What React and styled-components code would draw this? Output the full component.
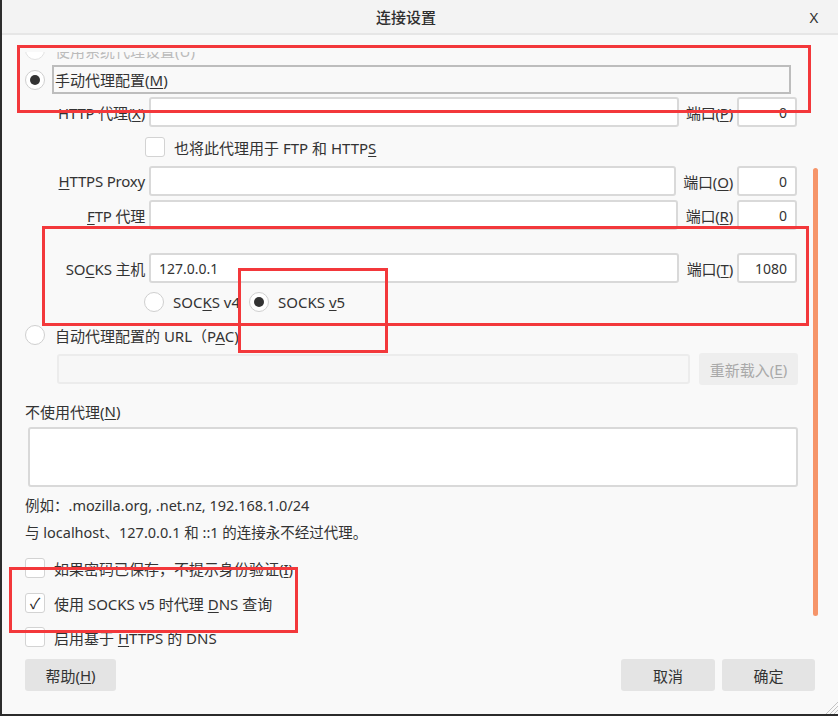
import React from "react";
import styled, { createGlobalStyle } from "styled-components";

const Global = createGlobalStyle`
  html, body { margin: 0; padding: 0; background: #f9f9f9; }
  body { font-family: "Noto Sans", "Noto Sans CJK SC", sans-serif; font-size: 15px; color: #333; }
  u { text-underline-offset: 2px; }
`;

const Window = styled.div`
  position: relative;
  width: 836px;
  height: 714px;
  border-left: 2px solid #2d2d2d;
  border-bottom: 2px solid #2b2b2b;
  background: #f9f9f9;
  display: flex;
  flex-direction: column;
  overflow: hidden;
`;

const TitleBar = styled.div`
  height: 33px;
  flex: none;
  display: flex;
  align-items: center;
  padding: 0 16px 0 4px;
  background: #f3f3f3;
  border-bottom: 2px solid #e6e6e6;
`;

const Title = styled.div`
  flex: 1;
  text-align: center;
  font-size: 15px;
  font-weight: 500;
  color: #2e2e2e;
`;

const Close = styled.div`
  width: 16px;
  text-align: center;
  font-size: 15px;
  color: #333;
`;

const Scroll = styled.div`
  flex: none;
  height: 600px;
  margin-top: 17px;
  overflow: hidden;
`;

const Inner = styled.div`
  margin-top: -17px;
  padding: 0 23px;
  display: flex;
  flex-direction: column;
`;

const Row = styled.div`
  display: flex;
  align-items: center;
  height: ${(p) => p.h || 30}px;
  margin-top: ${(p) => p.mt || 0}px;
  margin-left: ${(p) => p.ml || 0}px;
  gap: ${(p) => p.gap || 0}px;
  color: ${(p) => (p.faded ? "#bbb" : "inherit")};
  white-space: nowrap;
`;

const Focus = styled.div`
  margin-left: 7px;
  width: 734px;
  height: 25px;
  border: 2px solid #bdbdbd;
  display: flex;
  align-items: center;
  padding-left: 1px;
`;

const ProxyGrid = styled.div`
  display: grid;
  grid-template-columns: 120px 530px 50px 60px;
  column-gap: 4px;
  align-items: center;
  height: 30px;
  margin-top: ${(p) => p.mt || 0}px;
  white-space: nowrap;
`;

const FieldLabel = styled.div`
  text-align: right;
  letter-spacing: -0.2px;
`;

const Input = styled.div`
  box-sizing: border-box;
  height: ${(p) => p.h || 30}px;
  width: ${(p) => (p.w ? `${p.w}px` : "auto")};
  background: ${(p) => (p.disabled ? "#f7f7f7" : "#fff")};
  border: 2px solid ${(p) => (p.disabled ? "#ececec" : "#d9d9d9")};
  border-radius: 3px;
  display: flex;
  align-items: center;
  justify-content: ${(p) => (p.right ? "flex-end" : "flex-start")};
  padding: 0 8px;
  font-size: 14px;
  color: #333;
`;

const RadioDot = styled.span`
  box-sizing: border-box;
  flex: none;
  width: 20px;
  height: 20px;
  border-radius: 50%;
  background: #fff;
  border: 1px solid ${(p) => (p.faded ? "#e2e2e2" : "#cfcfcf")};
  display: flex;
  align-items: center;
  justify-content: center;
  &::after {
    content: "";
    width: 10px;
    height: 10px;
    border-radius: 50%;
    background: #333;
    display: ${(p) => (p.checked ? "block" : "none")};
  }
`;

const Box = styled.span`
  box-sizing: border-box;
  flex: none;
  width: 20px;
  height: 20px;
  border-radius: 3px;
  background: #fff;
  border: 1px solid #d3d3d3;
  display: flex;
  align-items: center;
  justify-content: center;
  color: #222;
  font-size: 15px;
  line-height: 1;
`;

const PlainLabel = styled.div`
  height: 26px;
  margin-top: ${(p) => p.mt || 0}px;
  display: flex;
  align-items: center;
`;

const TextArea = styled.div`
  box-sizing: border-box;
  margin: 3px 0 0 3px;
  width: 770px;
  height: 60px;
  background: #fff;
  border: 2px solid #d9d9d9;
  border-radius: 3px;
`;

const Note = styled.div`
  height: 24px;
  margin-top: ${(p) => p.mt || 0}px;
  display: flex;
  align-items: center;
  font-size: 14.5px;
`;

const Footer = styled.div`
  flex: none;
  display: flex;
  gap: 7px;
  padding: 7px 23px 0 23px;
`;

const Button = styled.div`
  box-sizing: border-box;
  height: 32px;
  width: ${(p) => p.w}px;
  background: ${(p) => (p.disabled ? "#eeeeee" : "#e4e4e4")};
  color: ${(p) => (p.disabled ? "#a9a9a9" : "#333")};
  border-radius: 3px;
  display: flex;
  align-items: center;
  justify-content: center;
  font-size: 15px;
  margin-left: ${(p) => (p.push ? "auto" : "0")};
  white-space: nowrap;
`;

const Mark = styled.div`
  position: absolute;
  left: ${(p) => p.x}px;
  top: ${(p) => p.y}px;
  width: ${(p) => p.w}px;
  height: ${(p) => p.h}px;
  box-sizing: border-box;
  border: 3px solid #f3383b;
  pointer-events: none;
`;

const Thumb = styled.div`
  position: absolute;
  left: 811px;
  top: 168px;
  width: 5px;
  height: 448px;
  border-radius: 3px;
  background: #f6956a;
`;

const Grip = styled.svg`
  position: absolute;
  right: 0;
  bottom: 0;
`;

function Radio({ checked, faded }) {
  return <RadioDot checked={checked} faded={faded} />;
}

function Check({ checked }) {
  return <Box>{checked ? "✓" : ""}</Box>;
}

const proxies = [
  { label: <>HTTP 代理(<u>X</u>)</>, port: <>端口(<u>P</u>)</>, num: "0", mt: 3 },
];

export default function App() {
  return (
    <>
      <Global />
      <Window>
        <TitleBar>
          <Title>连接设置</Title>
          <Close>X</Close>
        </TitleBar>
        <Scroll>
          <Inner>
            <Row h={30} gap={10} faded>
              <Radio faded />
              <span>使用系统代理设置(U)</span>
            </Row>
            <Row h={29}>
              <Radio checked />
              <Focus>手动代理配置(<u>M</u>)</Focus>
            </Row>
            {proxies.map((p, i) => (
              <ProxyGrid key={i} mt={p.mt}>
                <FieldLabel>{p.label}</FieldLabel>
                <Input />
                <FieldLabel>{p.port}</FieldLabel>
                <Input right>{p.num}</Input>
              </ProxyGrid>
            ))}
            <Row h={30} mt={5} ml={120} gap={9}>
              <Check />
              <span>也将此代理用于 FTP 和 HTTP<u>S</u></span>
            </Row>
            <ProxyGrid mt={4}>
              <FieldLabel><u>H</u>TTPS Proxy</FieldLabel>
              <Input w={527} />
              <FieldLabel>端口(<u>O</u>)</FieldLabel>
              <Input right>0</Input>
            </ProxyGrid>
            <ProxyGrid mt={4}>
              <FieldLabel><u>F</u>TP 代理</FieldLabel>
              <Input w={529} />
              <FieldLabel>端口(<u>R</u>)</FieldLabel>
              <Input right>0</Input>
            </ProxyGrid>
            <ProxyGrid mt={23}>
              <FieldLabel>SO<u>C</u>KS 主机</FieldLabel>
              <Input>127.0.0.1</Input>
              <FieldLabel>端口(<u>T</u>)</FieldLabel>
              <Input right>1080</Input>
            </ProxyGrid>
            <Row h={28} mt={5} ml={119} gap={9}>
              <Radio />
              <span>SOC<u>K</u>S v4</span>
              <Radio checked />
              <span>SOCKS <u>v</u>5</span>
            </Row>
            <Row h={28} mt={5} gap={10}>
              <Radio />
              <span>自动代理配置的 URL（P<u>A</u>C)</span>
            </Row>
            <Row h={30} mt={5} ml={32} gap={9}>
              <Input w={633} disabled />
              <Button w={99} disabled>重新载入(<u>E</u>)</Button>
            </Row>
            <PlainLabel mt={14}>不使用代理(<u>N</u>)</PlainLabel>
            <TextArea />
            <Note mt={5}>例如：.mozilla.org, .net.nz, 192.168.1.0/24</Note>
            <Note mt={3}>与 localhost、127.0.0.1 和 ::1 的连接永不经过代理。</Note>
            <Row h={28} mt={11} gap={9}>
              <Check />
              <span>如果密码已保存，不提示身份验证(<u>I</u>)</span>
            </Row>
            <Row h={28} mt={7} gap={9}>
              <Check checked />
              <span>使用 SOCKS v5 时代理 <u>D</u>NS 查询</span>
            </Row>
            <Row h={28} mt={6} gap={9}>
              <Check />
              <span>启用基于 <u>H</u>TTPS 的 DNS</span>
            </Row>
          </Inner>
        </Scroll>
        <Footer>
          <Button w={91}>帮助(<u>H</u>)</Button>
          <Button w={94} push>取消</Button>
          <Button w={93}>确定</Button>
        </Footer>
        <Thumb />
        <Grip width="14" height="14" viewBox="0 0 14 14">
          <path d="M14 2 L2 14 M14 6 L6 14 M14 10 L10 14" stroke="#c4c4c4" strokeWidth="1" />
        </Grip>
        <Mark x={15} y={45} w={794} h={68} />
        <Mark x={40} y={226} w={767} h={100} />
        <Mark x={236} y={268} w={150} h={85} />
        <Mark x={7} y={567} w={289} h={66} />
      </Window>
    </>
  );
}
